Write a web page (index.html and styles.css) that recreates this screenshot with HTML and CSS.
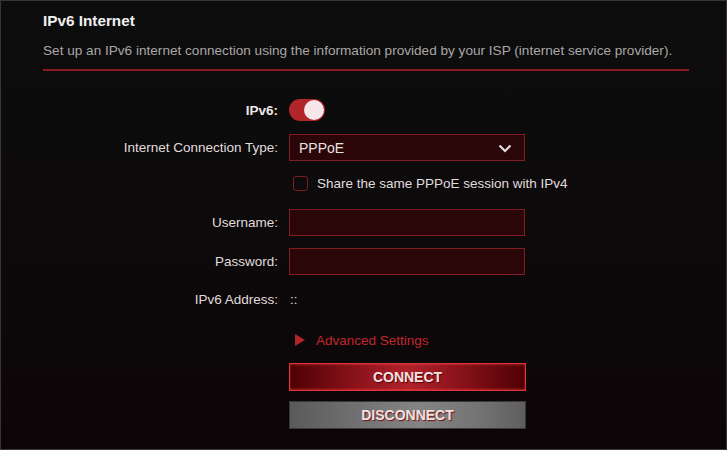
FILE: index.html
```html
<!DOCTYPE html>
<html lang="en">
<head>
    <meta charset="UTF-8">
    <title>IPv6 Internet</title>
    <link rel="stylesheet" href="styles.css">
</head>
<body>
    <div class="panel">
        <h2 class="title">IPv6 Internet</h2>
        <p class="desc">Set up an IPv6 internet connection using the information provided by your ISP (internet service provider).</p>

        <div class="form">
            <div class="row row_ipv6">
                <label class="label bold">IPv6:</label>
                <div class="field"><span class="toggle -on"><span class="knob"></span></span></div>
            </div>

            <div class="row row_type">
                <label class="label">Internet Connection Type:</label>
                <div class="field">
                    <div class="select">
                        <span>PPPoE</span>
                        <svg class="chevron" width="14" height="9" viewBox="0 0 14 9"><path d="M1.5 1.5 L7 7 L12.5 1.5" fill="none" stroke="#e4dcdc" stroke-width="2.2"/></svg>
                    </div>
                </div>
            </div>

            <div class="row row_check">
                <div class="label"></div>
                <div class="field"><span class="checkbox"></span><span class="check_text">Share the same PPPoE session with IPv4</span></div>
            </div>

            <div class="row row_user">
                <label class="label">Username:</label>
                <div class="field"><input class="input" type="text"></div>
            </div>

            <div class="row row_pass">
                <label class="label">Password:</label>
                <div class="field"><input class="input" type="password"></div>
            </div>

            <div class="row row_addr">
                <label class="label">IPv6 Address:</label>
                <div class="field"><span class="value">::</span></div>
            </div>

            <div class="row row_adv">
                <div class="label"></div>
                <div class="field"><a href="#" class="advanced"><span class="arrow"></span>Advanced Settings</a></div>
            </div>

            <div class="row row_connect">
                <div class="label"></div>
                <div class="field"><button class="btn btn_connect">CONNECT</button></div>
            </div>

            <div class="row row_disconnect">
                <div class="label"></div>
                <div class="field"><button class="btn btn_disconnect">DISCONNECT</button></div>
            </div>
        </div>
    </div>
</body>
</html>
```

FILE: styles.css
```css
*{
  box-sizing: border-box;
}
html, body{
  margin: 0;
  height: 100%;
}
body{
  background: #0d0b0b;
  font-family: "Liberation Sans", Arial, sans-serif;
  color: #d6d2d2;
  font-size: 13.5px;
}
div.panel{
  height: 450px;
  border: 1px solid #3a3432;
  background: linear-gradient(to bottom, #0c0d0d 0%, #0d0a0b 50%, #0c0507 100%);
  padding: 0 37px 0 42px;
  overflow: hidden;
}
h2.title{
  margin: 0;
  padding-top: 10px;
  font-size: 15.3px;
  line-height: 20px;
  font-weight: bold;
  color: #f2f0f0;
}
p.desc{
  margin: 11px 0 0 0;
  line-height: 18px;
  font-size: 13.6px;
  color: #a9a7a7;
  padding-bottom: 9px;
  border-bottom: 2px solid #8b1b20;
  white-space: nowrap;
}

div.form{
  display: flex;
  flex-direction: column;
}
div.row{
  display: grid;
  grid-template-columns: 235px 237px;
  column-gap: 11px;
  align-items: center;
}
.label{
  text-align: right;
  color: #e0dcdc;
  white-space: nowrap;
}
.label.bold{
  font-weight: bold;
  color: #ece8e8;
}
div.field{
  display: flex;
  align-items: center;
  white-space: nowrap;
}

div.row_ipv6{ margin-top: 28px; height: 22px; }
div.row_type{ margin-top: 13px; height: 27px; }
div.row_check{ margin-top: 14px; height: 16px; }
div.row_user{ margin-top: 18px; height: 27px; }
div.row_pass{ margin-top: 12px; height: 27px; }
div.row_addr{ margin-top: 15px; height: 18px; }
div.row_adv{ margin-top: 23px; height: 18px; }
div.row_connect{ margin-top: 14px; height: 28px; }
div.row_disconnect{ margin-top: 10px; height: 28px; }

span.toggle{
  position: relative;
  display: inline-block;
  width: 36px;
  height: 22px;
  border-radius: 11px;
  background: #b2252b;
}
span.toggle span.knob{
  position: absolute;
  top: 1px;
  right: 1px;
  width: 20px;
  height: 20px;
  border-radius: 50%;
  background: #f6e8ea;
}

div.select{
  width: 236px;
  height: 27px;
  background: #2a0608;
  border: 1px solid #7e1d22;
  display: flex;
  align-items: center;
  justify-content: space-between;
  padding: 0 12px 0 9px;
  color: #e6e2e2;
  font-size: 14px;
}
div.select svg.chevron{
  margin-top: 1px;
}

span.checkbox{
  flex-shrink: 0;
  width: 15px;
  height: 15px;
  margin-left: 4px;
  border: 1.5px solid #7a1e22;
  border-radius: 3px;
}
span.check_text{
  margin-left: 9px;
  color: #e0dcdc;
}

input.input{
  width: 236px;
  height: 27px;
  background: #2a0608;
  border: 1px solid #7e1d22;
  outline: none;
  padding: 0 8px;
  color: #e6e2e2;
}

span.value{
  color: #e0dcdc;
  padding-left: 1px;
}

a.advanced{
  display: flex;
  align-items: center;
  text-decoration: none;
  color: #c3262d;
  font-size: 13.5px;
}
a.advanced span.arrow{
  width: 0;
  height: 0;
  margin-left: 6px;
  margin-right: 11px;
  border-top: 6.5px solid transparent;
  border-bottom: 6.5px solid transparent;
  border-left: 10px solid #b3242a;
}

button.btn{
  width: 237px;
  height: 28px;
  font-family: "Liberation Sans", Arial, sans-serif;
  font-size: 14px;
  font-weight: bold;
  color: #f0e2e2;
  cursor: pointer;
  padding: 0;
}
button.btn_connect{
  border: 1px solid #e0323a;
  background: linear-gradient(to right, #4e0004 0%, #8e141c 30%, #b0222a 50%, #8e141c 70%, #4e0004 100%);
  box-shadow: inset 0 -1px 2px rgba(255, 60, 60, 0.5), inset 0 1px 2px rgba(255, 80, 80, 0.35);
  text-shadow: 1px 1px 1px #5a0008;
}
button.btn_disconnect{
  border: 1px solid #3c3838;
  background: linear-gradient(to right, #5a5a5a 0%, #7a7a7a 40%, #848484 55%, #747474 80%, #5e5e5e 100%);
  text-shadow: 1px 1px 1px #7a1016;
}
```
